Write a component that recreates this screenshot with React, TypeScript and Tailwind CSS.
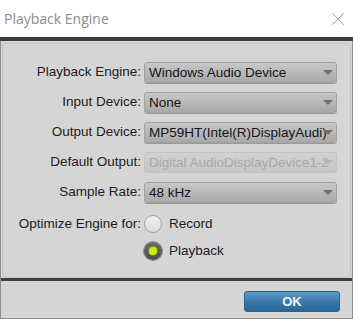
import { X } from 'lucide-react'

const Select = ({ value, disabled = false }: { value: string; disabled?: boolean }) => (
  <div
    className={
      disabled
        ? 'relative h-[21px] w-[193px] rounded-[3px] border border-[#c4c4c4] bg-gradient-to-b from-[#d2d2d2] to-[#c6c6c6] pl-[4px] pr-[14px] text-[13.5px] leading-[19px] text-[#a9a9a9] overflow-hidden whitespace-nowrap'
        : 'relative h-[21px] w-[193px] rounded-[3px] border border-[#a2a2a2] bg-gradient-to-b from-[#c8c8c8] to-[#a9a9a9] pl-[4px] pr-[14px] text-[13.5px] leading-[19px] text-[#141414] shadow-[0_1px_0_#9a9a9a] overflow-hidden whitespace-nowrap'
    }
  >
    {value}
    <span
      className={
        disabled
          ? 'absolute right-[3px] top-[7px] h-0 w-0 border-x-[5px] border-t-[5px] border-x-transparent border-t-[#b6b6b6]'
          : 'absolute right-[3px] top-[7px] h-0 w-0 border-x-[5px] border-t-[5px] border-x-transparent border-t-[#707070]'
      }
    />
  </div>
)

const Radio = ({ checked }: { checked: boolean }) =>
  checked ? (
    <span className="flex h-[18px] w-[18px] items-center justify-center rounded-full bg-gradient-to-b from-[#6a6a6a] to-[#4a4a4a] shadow-[0_0_0_1px_#8a8a8a]">
      <span className="h-[8px] w-[8px] rounded-full bg-[#c4f200] shadow-[0_0_2px_#b0e000]" />
    </span>
  ) : (
    <span className="h-[18px] w-[18px] rounded-full border border-[#a4a4a4] bg-gradient-to-b from-[#f2f2f2] to-[#dcdcdc]" />
  )

const App = () => {
  const rows = [
    { label: 'Playback Engine:', value: 'Windows Audio Device' },
    { label: 'Input Device:', value: 'None' },
    { label: 'Output Device:', value: 'MP59HT(Intel(R)DisplayAudi)' },
    { label: 'Default Output:', value: 'Digital AudioDisplayDevice1-2', disabled: true },
    { label: 'Sample Rate:', value: '48 kHz' },
  ]

  return (
    <div className="flex h-[319px] w-[353px] flex-col bg-white font-['Liberation_Sans',Arial,sans-serif]">
      {/* title bar */}
      <div className="flex h-[37px] items-center justify-between pl-[4px] pr-[4px]">
        <span className="font-['Open_Sans',sans-serif] text-[14px] text-[#8c8c8c]">Playback Engine</span>
        <X className="h-[22px] w-[22px] text-[#6e6e6e]" strokeWidth={0.75} />
      </div>
      <div className="h-[4px] bg-[#3c3c3c]" />

      <div className="flex flex-1 flex-col border-x border-b border-[#8e8e8e] bg-[#d5d5d5]">
        <div className="mx-[1px] mt-[2px] flex h-[235px] flex-col rounded-[3px] border border-[#c6c6c6] pt-[18px]">
          <div className="flex flex-col gap-[9px]">
            {rows.map((row) => (
              <div key={row.label} className="flex items-center">
                <span className="w-[139px] pr-[1px] text-right text-[13.5px] text-[#1c1c1c]">{row.label}</span>
                <span className="ml-[2px]">
                  <Select value={row.value} disabled={row.disabled} />
                </span>
              </div>
            ))}
          </div>

          <div className="mt-[11px] flex flex-col gap-[7px]">
            <div className="flex items-center">
              <span className="w-[139px] pr-[1px] text-right text-[13.5px] text-[#1c1c1c]">Optimize Engine for:</span>
              <span className="ml-[2px] flex items-center gap-[7px]">
                <Radio checked={false} />
                <span className="text-[13.5px] text-[#1c1c1c]">Record</span>
              </span>
            </div>
            <div className="flex items-center">
              <span className="ml-[141px] flex items-center gap-[7px]">
                <Radio checked />
                <span className="text-[13.5px] text-[#1c1c1c]">Playback</span>
              </span>
            </div>
          </div>
        </div>

        <div className="h-[3px] bg-[#3e3e3e]" />

        <div className="flex flex-1 justify-end pr-[12px] pt-[10px]">
          <button className="h-[21px] w-[96px] rounded-[3px] border border-[#2e5f86] bg-gradient-to-b from-[#5f9bc8] via-[#3a79ab] to-[#2c6696] text-[13px] font-bold leading-[19px] text-[#eef4fa]">
            OK
          </button>
        </div>
      </div>
    </div>
  )
}

export default App
